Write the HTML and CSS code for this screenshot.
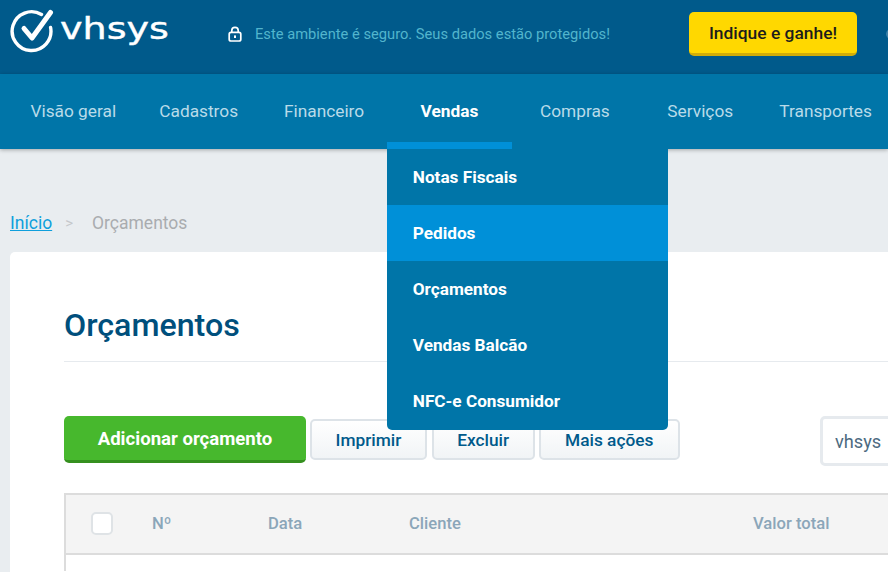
FILE: index.html
```html
<!DOCTYPE html>
<html lang="pt-BR">
<head>
  <meta charset="UTF-8" />
  <meta name="viewport" content="width=device-width, initial-scale=1" />
  <title>Orçamentos - vhsys</title>
  <link rel="stylesheet" href="styles.css">
</head>
<body>
  <header class="topbar">
    <a class="logo" href="#">
      <svg class="logo-mark" viewBox="0 0 44 44" width="44" height="44" aria-hidden="true">
        <path d="M31.5 5.5A19.4 19.4 0 1 0 40.6 18.5" fill="none" stroke="#fff" stroke-width="3.4" stroke-linecap="round"/>
        <path d="M14 19.5 L22 29 L40.5 3.5" fill="none" stroke="#fff" stroke-width="5" stroke-linecap="round" stroke-linejoin="round"/>
      </svg>
      <span class="logo-text">vhsys</span>
    </a>
    <div class="secure">
      <svg viewBox="0 0 14 16" width="14" height="16" aria-hidden="true">
        <path d="M3.8 7V4.6a3.2 3.2 0 0 1 6.4 0V7" fill="none" stroke="#fff" stroke-width="1.7"/>
        <rect x="1.2" y="6.4" width="11.6" height="8.6" rx="1.8" fill="none" stroke="#fff" stroke-width="1.7"/>
        <rect x="6" y="9.4" width="2" height="2.6" fill="#fff"/>
      </svg>
      <span>Este ambiente é seguro. Seus dados estão protegidos!</span>
    </div>
    <button class="btn-indique">Indique e ganhe!</button>
    <span class="user-cut"></span>
  </header>

  <nav class="mainnav">
    <a href="#">Visão geral</a>
    <a href="#">Cadastros</a>
    <a href="#">Financeiro</a>
    <div class="nav-open">
      <a class="active" href="#">Vendas</a>
      <ul class="dropdown">
        <li><a href="#">Notas Fiscais</a></li>
        <li><a class="hover" href="#">Pedidos</a></li>
        <li><a href="#">Orçamentos</a></li>
        <li><a href="#">Vendas Balcão</a></li>
        <li><a href="#">NFC-e Consumidor</a></li>
      </ul>
    </div>
    <a href="#">Compras</a>
    <a href="#">Serviços</a>
    <a href="#">Transportes</a>
  </nav>

  <main class="content">
    <div class="breadcrumb">
      <a href="#">Início</a>
      <span class="sep">&gt;</span>
      <span>Orçamentos</span>
    </div>

    <section class="card">
      <h1>Orçamentos</h1>

      <div class="toolbar">
        <button class="btn-add">Adicionar orçamento</button>
        <button class="btn">Imprimir</button>
        <button class="btn">Excluir</button>
        <button class="btn btn-more">Mais ações</button>
        <input class="search" type="text" value="vhsys">
      </div>

      <div class="table">
        <div class="table-head">
          <span class="check"></span>
          <span class="col-num">Nº</span>
          <span class="col-date">Data</span>
          <span class="col-client">Cliente</span>
          <span class="col-total">Valor total</span>
        </div>
      </div>
    </section>
  </main>
</body>
</html>
```

FILE: styles.css
```css
* {
  box-sizing: border-box;
  margin: 0;
  padding: 0;
  font-family: Roboto, Arial, sans-serif;
}

html,
body {
  height: 572px;
  overflow: hidden;
}

body {
  background-color: #e9edf0;
}

a {
  text-decoration: none;
}

/* top bar */
.topbar {
  display: flex;
  align-items: center;
  height: 74px;
  padding-left: 10px;
  background-color: #005a8b;
  overflow: hidden;
}

.topbar > * {
  flex: none;
}

.logo {
  display: flex;
  align-items: center;
  gap: 6px;
  width: 216px;
  margin-top: -12px;
}

.logo-text {
  color: #fff;
  font-family: "DejaVu Sans", sans-serif;
  font-size: 30px;
  line-height: 1;
  margin-top: -4px;
  transform: scaleX(1.27);
  transform-origin: left center;
  -webkit-text-stroke: 0.4px #fff;
}

.secure {
  display: flex;
  align-items: center;
  gap: 13px;
  width: 461px;
  margin-top: -6px;
  margin-left: 2px;
  font-size: 14.7px;
  color: #52b5cd;
}

.btn-indique {
  width: 168px;
  height: 44px;
  margin-top: -6px;
  border: none;
  border-bottom: 3px solid #d2ad08;
  border-radius: 5px;
  background-color: #ffd800;
  color: #1c1c1c;
  font-size: 17.4px;
  font-weight: 500;
}

.user-cut {
  width: 14px;
  height: 12px;
  margin-left: 29px;
  margin-top: -6px;
  border: 2px solid #3f82a8;
  border-radius: 50%;
}

/* main menu */
.mainnav {
  display: grid;
  grid-template-columns: repeat(7, 125.4px);
  align-items: stretch;
  height: 75px;
  padding-left: 10.6px;
  padding-bottom: 2px;
  background-color: #0075a8;
  box-shadow: 0 1px 4px rgba(0, 0, 0, 0.3);
  position: relative;
}

.mainnav a {
  display: flex;
  align-items: center;
  justify-content: center;
  color: #b9dbe9;
  font-size: 17.3px;
}

.nav-open {
  position: relative;
  display: flex;
  margin-bottom: -2px;
}

.mainnav .active {
  flex: 1;
  color: #fff;
  font-weight: 700;
  border-bottom: 7px solid #0090d8;
  padding-top: 5px;
}

.dropdown {
  position: absolute;
  top: 75px;
  left: 0;
  width: 281px;
  list-style: none;
  background-color: #0075a8;
  border-radius: 0 0 5px 5px;
  z-index: 10;
}

.mainnav .dropdown a {
  justify-content: flex-start;
  height: 56.2px;
  padding-left: 26px;
  padding-bottom: 1px;
  color: #fff;
  font-size: 17.2px;
  font-weight: 700;
}

.mainnav .dropdown .hover {
  background-color: #0090d8;
}

/* content */
.content {
  padding: 0 0 0 10px;
}

.breadcrumb {
  display: flex;
  gap: 13px;
  height: 103px;
  padding-top: 64px;
  font-size: 17.5px;
  color: #a9acaf;
}

.breadcrumb a {
  color: #0f9fdc;
  text-decoration: underline;
}

.breadcrumb .sep {
  color: #c5c8cb;
  font-size: 15px;
  margin-right: 6px;
  padding-top: 1px;
}

.card {
  width: 878px;
  height: 320px;
  padding: 0 0 0 54px;
  background-color: #fff;
  border-radius: 5px 0 0 0;
  overflow: hidden;
}

.card h1 {
  height: 110px;
  padding-top: 55px;
  border-bottom: 1px solid #e6eaee;
  color: #004f7c;
  font-size: 32.2px;
  font-weight: 500;
  line-height: 37px;
}

.toolbar {
  display: flex;
  align-items: center;
  gap: 5px;
  height: 50px;
  margin-top: 54px;
}

.toolbar > * {
  flex: none;
}

.btn-add {
  width: 242px;
  height: 47px;
  margin-top: -3px;
  margin-right: -1px;
  padding-top: 2px;
  border: none;
  border-bottom: 3px solid #35901f;
  border-radius: 5px;
  background-color: #47b82d;
  color: #fff;
  font-size: 18.6px;
  font-weight: 700;
}

.btn {
  height: 41px;
  margin-top: -3px;
  padding: 0 23.5px;
  border: 2px solid #dde3e8;
  border-radius: 5px;
  background: linear-gradient(#fff, #f1f4f6);
  color: #005a8b;
  font-size: 17.3px;
  font-weight: 500;
}

.btn-more {
  margin-left: -1px;
  padding: 0 24.5px;
}

.search {
  width: 120px;
  height: 50px;
  margin-left: 135px;
  padding-left: 12px;
  border: 3px solid #e6eaee;
  border-radius: 5px;
  color: #4c6a80;
  font-size: 18.2px;
}

.table {
  height: 78px;
  margin-top: 27px;
  border-left: 2px solid #dcdcdc;
}

.table-head {
  display: flex;
  align-items: center;
  height: 62px;
  padding-left: 25px;
  padding-bottom: 1px;
  background-color: #f4f4f4;
  border-top: 2px solid #dcdcdc;
  border-bottom: 2px solid #dcdcdc;
  color: #8ba6b9;
  font-size: 16.6px;
  font-weight: 500;
}

.check {
  width: 22px;
  height: 23px;
  margin-right: 39px;
  background-color: #fff;
  border: 2px solid #dfe3e6;
  border-radius: 5px;
}

.col-num {
  width: 116px;
}

.col-date {
  width: 141px;
}

.col-client {
  width: 344px;
}
```
